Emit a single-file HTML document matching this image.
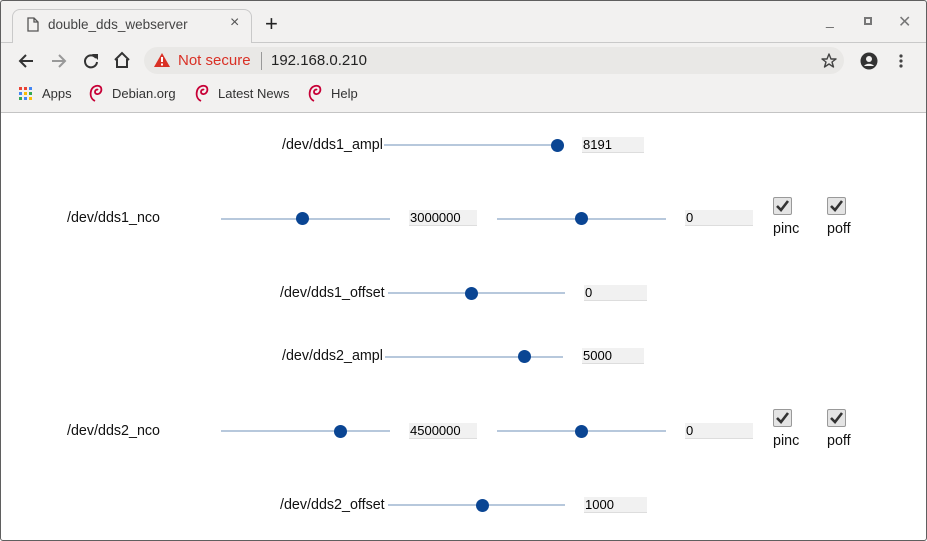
<!DOCTYPE html>
<html><head><meta charset="utf-8"><style>
*{margin:0;padding:0;box-sizing:border-box}
body{width:927px;height:541px;overflow:hidden;background:#fff;font-family:"Liberation Sans",sans-serif;position:relative}
.frame{position:absolute;left:0;top:0;width:927px;height:541px;border:1px solid #5f5f5f;border-radius:3px;pointer-events:none;z-index:10}
.chrome{position:absolute;left:0;top:0;width:927px;height:113px;background:#f2f1f0;border-bottom:1px solid #c4c4c4}
.tab{position:absolute;left:12px;top:9px;width:240px;height:34px;background:#f2f1f0;border:1px solid #c9c9c9;border-bottom:none;border-radius:8px 8px 0 0}
.tabline{position:absolute;top:42px;height:1px;background:#c9c9c9}
.t{position:absolute;white-space:nowrap}
.omni{position:absolute;left:144px;top:47px;width:700px;height:27px;background:#e9e8e6;border-radius:14px}
.lbl{position:absolute;font-size:14.3px;color:#111;white-space:nowrap}
.track{position:absolute;height:2px;background:#b7c8dc}
.thumb{position:absolute;width:13px;height:13px;border-radius:50%;background:#0a4593}
.inp{position:absolute;height:16px;background:#f1f1f1;border-bottom:1px solid #ddd;font-size:13px;line-height:16px;color:#000;padding-left:1px}
.cb{position:absolute;width:19px;height:18px;background:#e4e4e4;border:1px solid #999;border-radius:2px}
.cb svg{position:absolute;left:1px;top:1px}
</style></head><body>
<div class="chrome">
 <div class="tab"></div>
 <div class="tabline" style="left:0;width:13px"></div>
 <div class="tabline" style="left:251px;width:676px"></div>
 <svg class="t" style="left:27px;top:17px" width="12" height="15" viewBox="0 0 12 15"><path d="M1 1h6l4 4v9H1z M7 1v4h4" fill="none" stroke="#555" stroke-width="1.3"/></svg>
 <div class="t" style="left:48px;top:17px;font-size:13.5px;color:#444">double_dds_webserver</div>
 <div class="t" style="left:230px;top:14px;font-size:16px;color:#555">×</div>
 <div class="t" style="left:265px;top:11px;font-size:22px;color:#222">+</div>
 <div class="t" style="left:826px;top:12px;font-size:14px;color:#666">_</div>
 <div class="t" style="left:864px;top:17px;width:8px;height:8px;border:2px solid #777"></div>
 <div class="t" style="left:898px;top:12px;font-size:16px;color:#777">✕</div>
 <svg class="t" style="left:17px;top:52px" width="18" height="18" viewBox="0 0 18 18"><path d="M16 9H3M9 3L3 9l6 6" fill="none" stroke="#333" stroke-width="2"/></svg>
 <svg class="t" style="left:50px;top:52px" width="18" height="18" viewBox="0 0 18 18"><path d="M2 9h13M9 3l6 6-6 6" fill="none" stroke="#999" stroke-width="2"/></svg>
 <svg class="t" style="left:82px;top:52px" width="18" height="18" viewBox="0 0 18 18"><path d="M14 6A6 6 0 1 0 15 10" fill="none" stroke="#333" stroke-width="2"/><path d="M10 2h6v6z" fill="#333"/></svg>
 <svg class="t" style="left:113px;top:51px" width="18" height="18" viewBox="0 0 18 18"><path d="M2 9L9 2l7 7M4 8v8h10V8" fill="none" stroke="#333" stroke-width="2"/></svg>
 <div class="omni"></div>
 <svg class="t" style="left:154px;top:53px" width="16" height="14" viewBox="0 0 16 14"><path d="M8 0L16 14H0z" fill="#d93025"/><rect x="7" y="4" width="2" height="5" fill="#fff"/><rect x="7" y="10.5" width="2" height="2" fill="#fff"/></svg>
 <div class="t" style="left:178px;top:52px;font-size:15px;color:#d93025">Not secure</div>
 <div class="t" style="left:261px;top:52px;width:1px;height:18px;background:#999"></div>
 <div class="t" style="left:271px;top:52px;font-size:15px;color:#222">192.168.0.210</div>
 <svg class="t" style="left:821px;top:53px" width="16" height="15" viewBox="0 0 16 15"><path d="M8 1l2 5h5l-4 3 1.5 5L8 11l-4.5 3L5 9 1 6h5z" fill="none" stroke="#444" stroke-width="1.4" stroke-linejoin="round"/></svg>
 <svg class="t" style="left:860px;top:52px" width="18" height="18" viewBox="0 0 18 18"><circle cx="9" cy="9" r="8.5" fill="#333"/><circle cx="9" cy="7" r="3" fill="#f2f1f0"/><path d="M4 14c2-3 8-3 10 0" fill="#f2f1f0"/></svg>
 <svg class="t" style="left:899px;top:54px" width="4" height="14"><circle cx="2" cy="2" r="1.6" fill="#444"/><circle cx="2" cy="7" r="1.6" fill="#444"/><circle cx="2" cy="12" r="1.6" fill="#444"/></svg>
 <svg class="t" style="left:19px;top:87px" width="13" height="13" viewBox="0 0 13 13">
  <rect x="0" y="0" width="3" height="3" fill="#ea4335"/><rect x="5" y="0" width="3" height="3" fill="#ea4335"/><rect x="10" y="0" width="3" height="3" fill="#4285f4"/>
  <rect x="0" y="5" width="3" height="3" fill="#4285f4"/><rect x="5" y="5" width="3" height="3" fill="#fbbc05"/><rect x="10" y="5" width="3" height="3" fill="#34a853"/>
  <rect x="0" y="10" width="3" height="3" fill="#34a853"/><rect x="5" y="10" width="3" height="3" fill="#4285f4"/><rect x="10" y="10" width="3" height="3" fill="#fbbc05"/></svg>
 <div class="t" style="left:42px;top:86px;font-size:13px;color:#333">Apps</div>
 <svg class="t" style="left:89px;top:84px" width="14" height="18" viewBox="0 0 14 18"><path d="M6 17C2 15 1 11 2 7 3 3 7 1 10 2c3 1 3 5 1 7-2 2-5 1-5-1 0-2 2-3 3-2" fill="none" stroke="#c70036" stroke-width="1.8"/></svg>
 <div class="t" style="left:112px;top:86px;font-size:13px;color:#333">Debian.org</div>
 <svg class="t" style="left:195px;top:84px" width="14" height="18" viewBox="0 0 14 18"><path d="M6 17C2 15 1 11 2 7 3 3 7 1 10 2c3 1 3 5 1 7-2 2-5 1-5-1 0-2 2-3 3-2" fill="none" stroke="#c70036" stroke-width="1.8"/></svg>
 <div class="t" style="left:218px;top:86px;font-size:13px;color:#333">Latest News</div>
 <svg class="t" style="left:308px;top:84px" width="14" height="18" viewBox="0 0 14 18"><path d="M6 17C2 15 1 11 2 7 3 3 7 1 10 2c3 1 3 5 1 7-2 2-5 1-5-1 0-2 2-3 3-2" fill="none" stroke="#c70036" stroke-width="1.8"/></svg>
 <div class="t" style="left:331px;top:86px;font-size:13px;color:#333">Help</div>
</div>

<div class="lbl" style="left:282px;top:137px">/dev/dds1_ampl</div>
<div class="track" style="left:384px;top:144px;width:180px"></div>
<div class="thumb" style="left:551px;top:139px"></div>
<div class="inp" style="left:582px;top:137px;width:62px">8191</div>

<div class="lbl" style="left:67px;top:210px">/dev/dds1_nco</div>
<div class="track" style="left:221px;top:218px;width:169px"></div>
<div class="thumb" style="left:296px;top:212px"></div>
<div class="inp" style="left:409px;top:210px;width:68px">3000000</div>
<div class="track" style="left:497px;top:218px;width:169px"></div>
<div class="thumb" style="left:575px;top:212px"></div>
<div class="inp" style="left:685px;top:210px;width:68px">0</div>
<div class="cb" style="left:773px;top:197px"><svg width="15" height="14" viewBox="0 0 15 14"><path d="M2 7l4 4 7-9" fill="none" stroke="#333" stroke-width="2.6"/></svg></div>
<div class="lbl" style="left:773px;top:221px">pinc</div>
<div class="cb" style="left:827px;top:197px"><svg width="15" height="14" viewBox="0 0 15 14"><path d="M2 7l4 4 7-9" fill="none" stroke="#333" stroke-width="2.6"/></svg></div>
<div class="lbl" style="left:827px;top:221px">poff</div>

<div class="lbl" style="left:280px;top:285px">/dev/dds1_offset</div>
<div class="track" style="left:388px;top:292px;width:177px"></div>
<div class="thumb" style="left:465px;top:287px"></div>
<div class="inp" style="left:584px;top:285px;width:63px">0</div>

<div class="lbl" style="left:282px;top:348px">/dev/dds2_ampl</div>
<div class="track" style="left:385px;top:356px;width:178px"></div>
<div class="thumb" style="left:518px;top:350px"></div>
<div class="inp" style="left:582px;top:348px;width:62px">5000</div>

<div class="lbl" style="left:67px;top:423px">/dev/dds2_nco</div>
<div class="track" style="left:221px;top:430px;width:169px"></div>
<div class="thumb" style="left:334px;top:425px"></div>
<div class="inp" style="left:409px;top:423px;width:68px">4500000</div>
<div class="track" style="left:497px;top:430px;width:169px"></div>
<div class="thumb" style="left:575px;top:425px"></div>
<div class="inp" style="left:685px;top:423px;width:68px">0</div>
<div class="cb" style="left:773px;top:409px"><svg width="15" height="14" viewBox="0 0 15 14"><path d="M2 7l4 4 7-9" fill="none" stroke="#333" stroke-width="2.6"/></svg></div>
<div class="lbl" style="left:773px;top:433px">pinc</div>
<div class="cb" style="left:827px;top:409px"><svg width="15" height="14" viewBox="0 0 15 14"><path d="M2 7l4 4 7-9" fill="none" stroke="#333" stroke-width="2.6"/></svg></div>
<div class="lbl" style="left:827px;top:433px">poff</div>

<div class="lbl" style="left:280px;top:497px">/dev/dds2_offset</div>
<div class="track" style="left:388px;top:504px;width:177px"></div>
<div class="thumb" style="left:476px;top:499px"></div>
<div class="inp" style="left:584px;top:497px;width:63px">1000</div>

<div class="frame"></div>
</body></html>
